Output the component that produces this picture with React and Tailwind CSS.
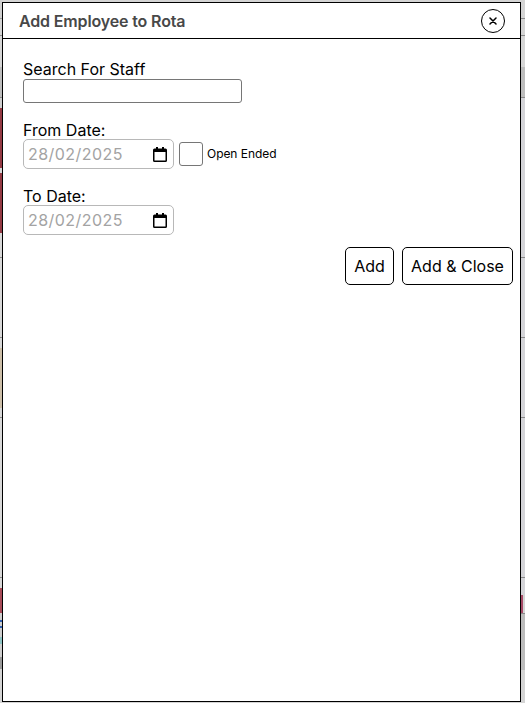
const rowsLeft = [
  ["h-[18px]", "bg-[#cfcfcf]"], ["h-px", "bg-[#9a9a9a]"], ["h-[16px]", "bg-[#d4d4d4]"], ["h-px", "bg-[#8a8a8a]"],
  ["h-[31px]", "bg-[#d6d6d6]"], ["h-[30px]", "bg-[#bdbdbd]"], ["h-px", "bg-[#8a8a8a]"], ["h-[10px]", "bg-[#cfcfcf]"],
  ["h-[60px]", "bg-[#943a44]"], ["h-[5px]", "bg-[#d8d8d8]"], ["h-[60px]", "bg-[#943a44]"], ["h-[24px]", "bg-[#d8d8d8]"],
  ["h-px", "bg-[#8a8a8a]"], ["h-[10px]", "bg-[#d8d8d8]"], ["h-[69px]", "bg-[#d8d8d8]"], ["h-px", "bg-[#8a8a8a]"],
  ["h-[10px]", "bg-[#d8d8d8]"], ["h-[60px]", "bg-[#cdbfa9]"], ["h-[9px]", "bg-[#d8d8d8]"], ["h-px", "bg-[#8a8a8a]"],
  ["h-[159px]", "bg-[#d8d8d8]"], ["h-px", "bg-[#8a8a8a]"], ["h-[10px]", "bg-[#d8d8d8]"], ["h-[25px]", "bg-[#a84c58]"],
  ["h-[7px]", "bg-[#cfcfcf]"], ["h-[2px]", "bg-[#2f5fb0]"], ["h-[4px]", "bg-[#cfcfcf]"], ["h-[2px]", "bg-[#2f5fb0]"],
  ["h-[9px]", "bg-[#cfcfcf]"], ["h-[7px]", "bg-[#8fc4c4]"], ["h-[13px]", "bg-[#cfcfcf]"], ["h-[12px]", "bg-[#9a9a9a]"],
  ["h-[33px]", "bg-[#d4d4d4]"],
];

const rowsRight = [
  ["h-[18px]", "bg-[#d4d4d4]"], ["h-px", "bg-[#8a8a8a]"], ["h-[16px]", "bg-[#d4d4d4]"], ["h-px", "bg-[#8a8a8a]"],
  ["h-[31px]", "bg-[#d6d6d6]"], ["h-[30px]", "bg-[#bdbdbd]"], ["h-px", "bg-[#8a8a8a]"], ["h-[159px]", "bg-[#d4d4d8]"],
  ["h-px", "bg-[#8a8a8a]"], ["h-[79px]", "bg-[#d4d4d8]"], ["h-px", "bg-[#8a8a8a]"], ["h-[79px]", "bg-[#d4d4d8]"],
  ["h-px", "bg-[#8a8a8a]"], ["h-[159px]", "bg-[#d4d4d8]"], ["h-px", "bg-[#8a8a8a]"], ["h-[17px]", "bg-[#d4d4d8]"],
  ["h-[18px] w-[2px]", "bg-[#a84c68]"],
  ["h-px", "bg-[#8a8a8a]"], ["h-[56px]", "bg-[#bcbcbc]"], ["h-[33px]", "bg-[#d4d4d4]"],
];

function Strip({ rows, className }) {
  return (
    <div className={`flex flex-col ${className}`}>
      {rows.map(([h, c], i) => (
        <div key={i} className={`${h} ${c} shrink-0`} />
      ))}
    </div>
  );
}

function CalendarIcon() {
  return (
    <svg width="14" height="15" viewBox="0 0 14 15" className="shrink-0">
      <path
        fill="#000"
        fillRule="evenodd"
        d="M3 0h2v1.500h4V0h2v1.500h1.500A1.500 1.500 0 0 1 14 3v10.500a1.500 1.500 0 0 1-1.500 1.500h-11A1.500 1.500 0 0 1 0 13.500V3a1.500 1.500 0 0 1 1.500-1.500H3V0zM1.500 5v8.500h11V5h-11z"
      />
    </svg>
  );
}

function DateField() {
  return (
    <div className="flex h-[30px] w-[151px] items-center rounded-[5px] border border-[#b8b8b8] bg-white pl-1 pr-[6px]">
      <input
        type="text"
        readOnly
        value="28/02/2025"
        className="w-[118px] min-w-0 flex-1 bg-transparent text-base tracking-[0.45px] text-[#a3a3a3] outline-none"
      />
      <CalendarIcon />
    </div>
  );
}

export default function App() {
  return (
    <div className="relative flex h-[703px] w-[525px] justify-between overflow-hidden bg-[#d4d4d4] font-['Inter','Liberation_Sans',sans-serif]">
      <Strip rows={rowsLeft} className="w-[2px]" />
      <Strip rows={rowsRight} className="w-[4px]" />

      <div className="absolute left-[2px] top-[2px] flex h-[700px] w-[519px] flex-col border-black bg-white [border-style:solid] [border-width:1.5px]">
        <header className="flex h-[36px] shrink-0 items-center justify-between border-b border-black pl-[16px] pr-[15px]">
          <h1 className="text-base font-semibold tracking-[-0.15px] text-[#484848]">Add Employee to Rota</h1>
          <button className="flex h-6 w-6 items-center justify-center rounded-full border-[1.5px] border-black bg-white">
            <svg width="8" height="8" viewBox="0 0 8 8">
              <path d="M1 1l6 6M7 1L1 7" stroke="#000" strokeWidth="1.500" strokeLinecap="round" />
            </svg>
          </button>
        </header>

        <main className="flex flex-col px-[20px] pt-[21px] text-base text-black">
          <label className="leading-[19px]">Search For Staff</label>
          <input
            type="text"
            className="h-6 w-[219px] rounded-[3px] border border-[#767676] bg-white outline-none"
          />

          <label className="mt-[18px] leading-[18px]">From Date:</label>
          <div className="flex items-center">
            <DateField />
            <span className="ml-[5px] h-6 w-6 rounded-[3px] border border-[#767676] bg-white" />
            <span className="ml-1 text-xs tracking-[-0.05px] text-black">Open Ended</span>
          </div>

          <label className="mt-[18px] leading-[18px]">To Date:</label>
          <DateField />
        </main>

        <div className="mt-3 flex justify-end gap-2 pr-[7px]">
          <button className="h-[38px] w-[49px] rounded-[5px] border border-black bg-white text-base text-black">Add</button>
          <button className="h-[38px] w-[111px] rounded-[5px] border border-black bg-white text-base text-black">Add &amp; Close</button>
        </div>
      </div>
    </div>
  );
}
